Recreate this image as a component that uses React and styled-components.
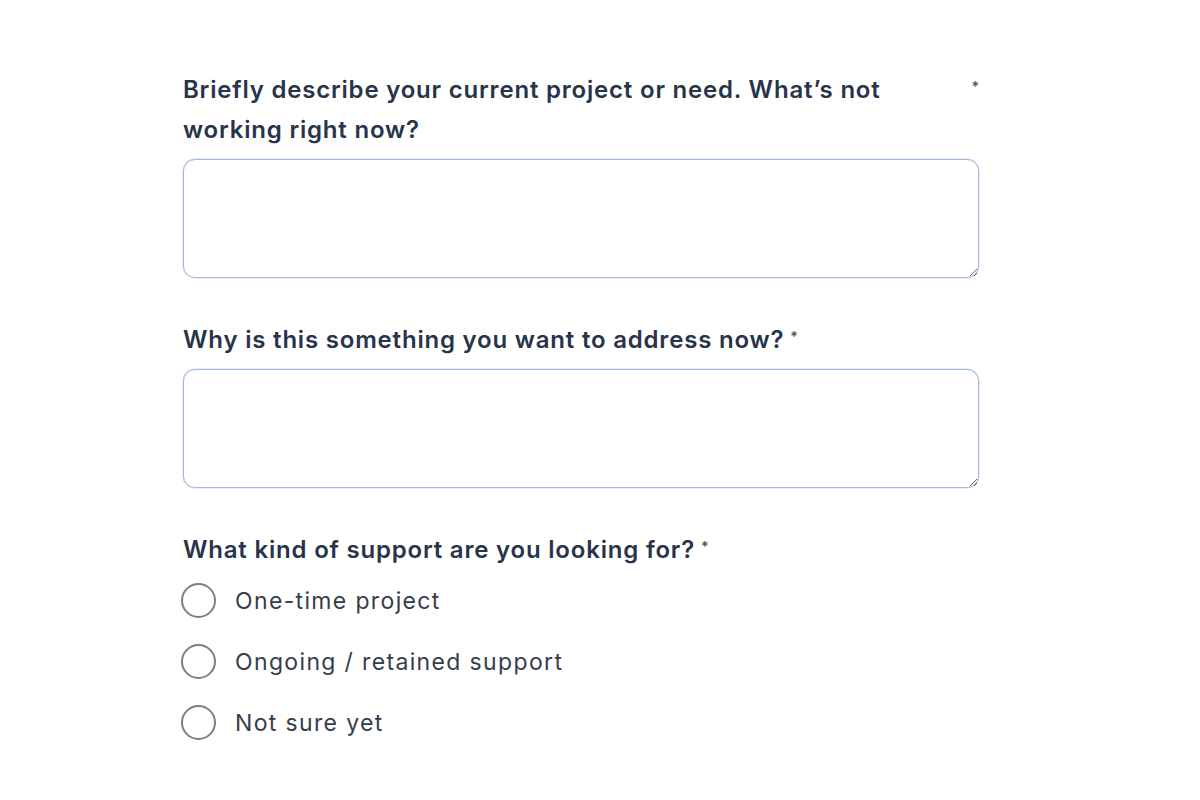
import React from "react";
import styled, { createGlobalStyle } from "styled-components";

const Global = createGlobalStyle`
  html, body { margin: 0; padding: 0; background: #ffffff; }
  body { font-family: "Inter", "Noto Sans", sans-serif; }
`;

const Form = styled.form`
  width: 796px;
  padding: 70px 0 40px 183px;
  display: flex;
  flex-direction: column;
`;

const Field = styled.div`
  display: flex;
  flex-direction: column;
  margin-bottom: ${(p) => p.$mb || 0}px;
`;

const Label = styled.label`
  display: flex;
  gap: 6px;
  font-family: "Inter", sans-serif;
  font-weight: 600;
  font-size: 24px;
  letter-spacing: 0.8px;
  line-height: 40px;
  color: #28344a;
`;

const Req = styled.span`
  font-size: 14px;
  line-height: 34px;
  color: #4a5568;
  letter-spacing: 0;
  flex: none;
`;

const TextArea = styled.textarea`
  box-sizing: border-box;
  width: 796px;
  height: 119px;
  margin-top: 9px;
  border: 1.5px solid #a4b9d8;
  box-shadow: 0 0 0 0.5px rgba(164, 185, 216, 0.5);
  border-radius: 12px;
  resize: vertical;
  outline: none;
  font: inherit;
  padding: 10px 14px;
`;

const Options = styled.div`
  display: flex;
  flex-direction: column;
  margin-left: -2px;
`;

const Option = styled.label`
  display: flex;
  align-items: center;
  gap: 19px;
  height: 61px;
  font-family: "Inter", sans-serif;
  font-size: 23px;
  letter-spacing: 1.35px;
  color: #363d4a;
  cursor: pointer;
`;

const Circle = styled.span`
  box-sizing: border-box;
  width: 35px;
  height: 35px;
  border-radius: 50%;
  border: 2px solid #7f7f7f;
  background: #fff;
  flex: none;
`;

export default function App() {
  return (
    <>
      <Global />
      <Form onSubmit={(e) => e.preventDefault()}>
        <Field $mb={42}>
          <Label>
            <span>Briefly describe your current project or need. What’s not working right now?</span>
            <Req>*</Req>
          </Label>
          <TextArea />
        </Field>
        <Field $mb={42}>
          <Label>
            <span>Why is this something you want to address now?</span>
            <Req>*</Req>
          </Label>
          <TextArea />
        </Field>
        <Field>
          <Label>
            <span>What kind of support are you looking for?</span>
            <Req>*</Req>
          </Label>
          <Options>
            <Option><Circle />One-time project</Option>
            <Option><Circle />Ongoing / retained support</Option>
            <Option><Circle />Not sure yet</Option>
          </Options>
        </Field>
      </Form>
    </>
  );
}
